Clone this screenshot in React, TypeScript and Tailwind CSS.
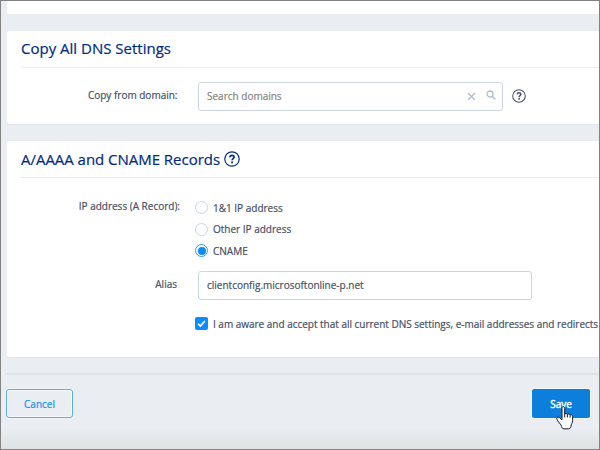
import React from "react";

function Help({ size, className }: { size: number; className: string }) {
  return (
    <svg width={size} height={size} viewBox="0 0 16 16" fill="none" stroke="currentColor" className={className}>
      <circle cx="8" cy="8" r="7.2" strokeWidth="1.2" />
      <path d="M5.9 6.2C6 4.9 6.9 4.3 8 4.3s2.1.7 2.1 1.8c0 1.4-2 1.6-2 3.2" strokeWidth="1.7" />
      <path d="M8.1 10.4v1.8" strokeWidth="1.8" />
    </svg>
  );
}

function Radio({ label, checked = false }: { label: string; checked?: boolean }) {
  return (
    <label className="flex h-[21.5px] items-center">
      <span
        className={
          "flex size-[13px] shrink-0 items-center justify-center rounded-full border bg-white " +
          (checked ? "border-[#2f9bf5]" : "border-[#ccd4de]")
        }
      >
        {checked && <span className="size-[8px] rounded-full bg-[#0a8cff]" />}
      </span>
      <span className="ml-[5px]">{label}</span>
    </label>
  );
}

export default function App() {
  return (
    <div className="flex h-[450px] w-[600px] flex-col overflow-hidden whitespace-nowrap border border-[#828282] bg-[#eaeef2] font-['Open_Sans',sans-serif] text-[10px] leading-[14px] text-[#465067] [-webkit-text-stroke:0.2px]">
      <div className="ml-[6px] h-[13px] shrink-0 rounded-b-[2px] bg-white" />

      <section className="mt-[17px] ml-[6px] h-[93px] shrink-0 rounded-l-[2px] bg-white pl-[14px] shadow-[0_1px_0_#e2e6eb]">
        <h2 className="flex h-[37px] items-center border-b border-[#ebedf0] pb-[2px] text-[15px] leading-[20px] text-[#002a84]">
          Copy All DNS Settings
        </h2>
        <div className="flex items-center pt-[14px]">
          <span className="w-[156.5px] pb-[3px] text-right">Copy from domain:</span>
          <div className="ml-[20.5px] flex h-[29px] w-[305px] items-center rounded-[3px] border border-[#ccd5e0] pr-[6px] pb-px pl-[8px] text-[#858585]">
            <span className="flex-1">Search domains</span>
            <svg width="9" height="9" viewBox="0 0 9 9" fill="none" stroke="#afbccc" strokeWidth="1.3">
              <path d="M1 1l7 7M8 1L1 8" />
            </svg>
            <svg width="10" height="10" viewBox="0 0 10 10" fill="none" stroke="#afbccc" strokeWidth="1.3" className="mb-[2px] ml-[10px]">
              <circle cx="4" cy="4" r="3" />
              <path d="M6.2 6.2L9.3 9.3" />
            </svg>
          </div>
          <Help size={14} className="mb-[2px] ml-[9px]" />
        </div>
      </section>

      <section className="mt-[17px] ml-[6px] h-[216px] shrink-0 rounded-l-[2px] bg-white pl-[14px] shadow-[0_1px_0_#e2e6eb]">
        <h2 className="flex h-[37px] items-center border-b border-[#ebedf0] text-[15px] leading-[20px] tracking-[-0.03px] text-[#002a84]">
          A/AAAA and CNAME Records
          <Help size={16} className="ml-[4px]" />
        </h2>
        <div className="flex pt-[19px]">
          <span className="mt-[2px] w-[159px] text-right">IP address (A Record):</span>
          <div className="ml-[15px]">
            <Radio label="1&1 IP address" />
            <Radio label="Other IP address" />
            <Radio label="CNAME" checked />
          </div>
        </div>
        <div className="flex items-center pt-[9px]">
          <span className="w-[156px] pb-[2px] text-right">Alias</span>
          <div className="ml-[21px] flex h-[29px] w-[334px] items-center rounded-[3px] border border-[#ccd5e0] pl-[8px]">
            clientconfig.microsoftonline-p.net
          </div>
        </div>
        <label className="mt-[16px] ml-[174px] flex items-center">
          <span className="mt-px flex size-[13px] shrink-0 items-center justify-center rounded-[2px] bg-[#0a8cff]">
            <svg width="9" height="9" viewBox="0 0 8 8" fill="none" stroke="white" strokeWidth="1.5">
              <path d="M1 4.2l2 2L7 1.8" />
            </svg>
          </span>
          <span className="mt-px ml-[5px] tracking-[-0.015px]">
            I am aware and accept that all current DNS settings, e-mail addresses and redirects
          </span>
        </label>
      </section>

      <footer className="mt-[16px] ml-[5px] flex flex-1 items-start justify-between border-t-2 border-[#dfe3e7] pt-[14px]">
        <button className="h-[29px] w-[67px] rounded-[3px] border border-[#55acf3] text-[#1590f5] shadow-[inset_0_0_0_1px_#f6f9fc,0_0_0_1px_#f1f4f7]">
          Cancel
        </button>
        <div className="relative mr-[9px]">
          <button className="h-[29px] w-[58px] rounded-[2px] bg-[#0b7fdb] text-white shadow-[0_0_0_1px_#f4f7fa] [-webkit-text-stroke:0.4px]">
            Save
          </button>
          <svg width="19" height="25" viewBox="0 0 19 25" className="absolute top-[17px] left-[24px]">
            <path
              d="M6 2.2c0-2 2.7-2 2.7 0v6.2c.4-1.3 2.5-1.2 2.7.2.7-1.1 2.6-.8 2.7.6.9-.8 2.5-.3 2.5 1.2v4.3c0 2.5-1.7 3.4-1.7 5.8 0 1.2-1 2.3-2.4 2.3H8c-1.5 0-2.1-1-2.4-2.2-.4-1.8-1.9-3.2-3.2-4.8L1 13.2c-1-1.5.7-2.8 2.1-1.8L6 13.8Z"
              fill="white"
              stroke="#111827"
              strokeWidth="1"
              strokeLinejoin="round"
            />
            <path d="M8.7 8.4v3M11.4 8.8v2.6M14.1 9.4v2.2" stroke="#111827" strokeWidth="1" />
          </svg>
        </div>
      </footer>
      <div className="h-[20px] shrink-0 bg-linear-to-b from-[#eaeef2] to-[#dfe1e3]" />
    </div>
  );
}
